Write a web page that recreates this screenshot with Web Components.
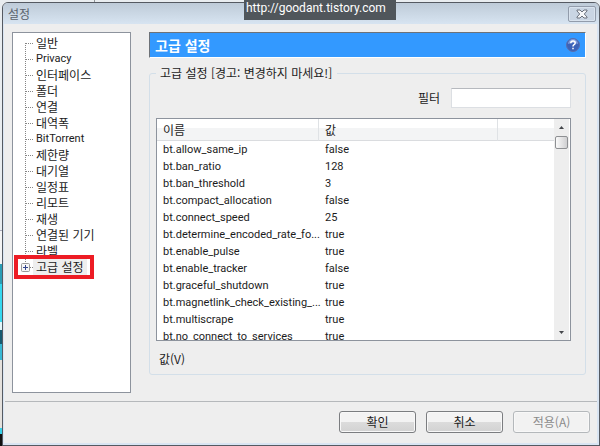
<!DOCTYPE html>
<html lang="ko">
<head>
<meta charset="utf-8">
<title>설정</title>
<style>
  html, body {height: 100%}
  body {
    margin: 0;
    box-sizing: border-box;
    padding: 2px 0 0 2px;
    overflow: hidden;
    color: #1c1c1c;
    font: 12px/16px "Noto Sans CJK KR", sans-serif;
    background:
      linear-gradient(90deg, transparent 94px, #8f9498 94px 95px, transparent 95px) 0 0/100% 2px no-repeat,
      linear-gradient(#e9edf0 230px, #aab 230px 231px, #f4f4f4 231px 264px, #2a9db5 264px 284px, #35d8f0 284px 322px, #e0f6fa 322px 330px, #155a70 330px 344px, #38b8d4 344px 360px, #e4e1dd 360px 428px, #35d0e8 428px 434px, #111 434px);
  }
</style>
</head>
<body>

<template id="app-dialog">
  <style>
    :host {
      position: relative;
      display: flex;
      flex-direction: column;
      box-sizing: border-box;
      height: 100%;
      border: 1px solid #555a62;
      border-radius: 6px 6px 0 0;
      background: #eee;
      box-shadow: inset -2px -2px #d9e5f3, inset 1px 0 #d9e5f3;
      overflow: hidden;
    }
    main {
      display: flex;
      flex: 1;
      min-height: 0;
      gap: 18px;
      padding: 8px 13px 8px 9px;
    }
    .page {
      display: flex;
      flex-direction: column;
      flex: 1;
      min-width: 0;
      gap: 7px;
    }
    footer {
      display: flex;
      justify-content: flex-end;
      gap: 10px;
      margin: 0 2px;
      padding: 9px 7px 12px;
      border-top: 1px solid #b5b8bb;
    }
  </style>
  <slot name="title"></slot>
  <main>
    <slot name="tree"></slot>
    <div class="page"><slot></slot></div>
  </main>
  <footer><slot name="actions"></slot></footer>
</template>

<template id="title-bar">
  <style>
    :host {
      display: flex;
      align-items: center;
      justify-content: space-between;
      height: 21px;
      padding: 0 3px 0 5px;
      color: #5a626c;
      background: linear-gradient(#becbd8, #d7e4f1);
    }
    h1 {margin: 0; font: inherit}
    button {
      display: grid;
      place-items: center;
      width: 28px;
      height: 16px;
      padding: 0;
      border: 1px solid #929cab;
      border-radius: 2px;
      background: #c9d5e3;
      box-shadow: inset 0 0 0 1px #d9e3ee;
    }
  </style>
  <h1><slot></slot></h1>
  <button type="button" aria-label="닫기">
    <svg width="12" height="10" viewBox="0 0 12 10"><path d="M1 1h3l2 2 2-2h3v1L8.300 5 11 8v1H8L6 7 4 9H1V8l2.700-3L1 2z" fill="#f6f8fa" stroke="#6b717c"/></svg>
  </button>
</template>

<template id="option-tree">
  <style>
    :host {
      box-sizing: border-box;
      width: 119px;
      border: 1px solid #8d939d;
      background: #fff;
    }
    ul {
      margin: 0;
      padding: 2px 0 0 12px;
      list-style: none;
    }
    li {
      position: relative;
      display: flex;
      align-items: center;
      height: 16px;
      white-space: nowrap;
    }
    .lines {flex: none}
    a {
      padding: 0 3px;
      color: inherit;
      text-decoration: none;
    }
    a:lang(en) {font: 11px/16px Roboto, sans-serif}
    .lines path {stroke: #858585; stroke-dasharray: 1 1}
    .current .lines {margin-left: -4px}
    .current a {background: #eee}
    .current::after {
      content: "";
      position: absolute;
      inset: -4px auto -4px -11px;
      width: 72px;
      border: 4px solid #ed1c24;
    }
  </style>
  <ul></ul>
</template>

<template id="page-banner">
  <style>
    :host {
      display: flex;
      align-items: center;
      justify-content: space-between;
      box-sizing: border-box;
      height: 26px;
      padding: 0 5px;
      border: 1px solid;
      border-color: #6d7278 #fff #fff #6d7278;
      color: #fff;
      background: #3399ff;
    }
    h2 {margin: 0; font-size: 14px; line-height: 20px; font-weight: 700}
    a {display: flex}
  </style>
  <h2><slot></slot></h2>
  <a href="#help" aria-label="도움말">
    <svg width="14" height="14" viewBox="0 0 14 14">
      <circle cx="7" cy="7" r="6.500" fill="#3c62b8" stroke="#5a6fae"/>
      <path d="M2 6a5 5 0 0 1 10 0q-5-2-10 0z" fill="#7f9bdb"/>
      <path d="M4.800 5.300q0-2.200 2.200-2.200t2.200 1.900q0 1.100-1.100 1.700T7 8.600M7 9.800v1.500" fill="none" stroke="#fff" stroke-width="1.500"/>
    </svg>
  </a>
</template>

<template id="settings-group">
  <style>
    :host {
      display: flex;
      flex: 1;
      min-height: 0;
    }
    fieldset {
      display: flex;
      flex-direction: column;
      flex: 1;
      min-width: 0;
      margin: 0 0 18px;
      padding: 7px 14px 7px 6px;
      border: 1px solid #d3dfe9;
      border-radius: 3px;
    }
    legend {margin: 0; padding: 0 5px 0 4px}
    .filter {
      display: flex;
      align-items: center;
      justify-content: flex-end;
      gap: 11px;
      margin-bottom: 10px;
    }
    input {
      box-sizing: border-box;
      width: 120px;
      height: 20px;
      border: 1px solid #dcdfe3;
      border-top-color: #b6b9be;
      background: #fff;
      font: inherit;
    }
    .value {margin: 10px 0 0 3px}
  </style>
  <fieldset>
    <legend><slot name="legend"></slot></legend>
    <div class="filter">
      <label for="filter">필터</label>
      <input id="filter" type="text">
    </div>
    <slot></slot>
    <div class="value"><slot name="value"></slot></div>
  </fieldset>
</template>

<template id="option-table">
  <style>
    :host {
      display: flex;
      flex: 1;
      min-height: 0;
      border: 1px solid #8d939d;
      background: #fff;
    }
    .rows {flex: 1; min-width: 0; overflow: hidden}
    table {
      width: 100%;
      table-layout: fixed;
      border-collapse: separate;
      border-spacing: 0;
    }
    .name {width: 162px}
    .blank {width: 56px}
    th, td {
      box-sizing: border-box;
      height: 17px;
      padding: 0 0 0 6px;
      text-align: left;
      font-weight: 400;
      white-space: nowrap;
    }
    td {font: 11px/17px Roboto, sans-serif}
    th {
      height: 22px;
      border-right: 1px solid #dfe2e5;
      border-bottom: 1px solid #dadcdf;
      background: linear-gradient(#fff 45%, #f3f4f5 45%);
    }
    th:last-child {border-right: 0}
    .bar {
      display: flex;
      flex-direction: column;
      align-items: center;
      width: 15px;
      margin-right: 1px;
      background: #eee;
    }
    .bar svg {flex: none}
    .thumb {
      box-sizing: border-box;
      width: 13px;
      height: 13px;
      border: 1px solid #8e9093;
      border-radius: 2px;
      background: linear-gradient(90deg, #fafafa, #cfcfd1);
    }
    .space {flex: 1}
  </style>
  <div class="rows">
    <table>
      <colgroup><col class="name"><col><col class="blank"></colgroup>
      <thead><tr><th>이름</th><th>값</th><th></th></tr></thead>
      <tbody></tbody>
    </table>
  </div>
  <div class="bar">
    <svg width="15" height="17" viewBox="0 0 15 17"><path d="M5 10l2.500-3L10 10z" fill="#44474b"/></svg>
    <div class="thumb"></div>
    <div class="space"></div>
    <svg width="15" height="17" viewBox="0 0 15 17"><path d="M5 8h5l-2.500 3z" fill="#44474b"/></svg>
  </div>
</template>

<template id="dialog-button">
  <style>
    :host {display: block}
    button {
      display: block;
      box-sizing: border-box;
      width: 77px;
      height: 22px;
      padding: 0;
      border: 1px solid #7b7d80;
      border-radius: 3px;
      color: inherit;
      font: inherit;
      background: linear-gradient(#f3f3f3 50%, #dcdcdc 50%, #d2d2d2);
      box-shadow: inset 0 0 0 1px #f8f8f8;
    }
    button:disabled {
      border-color: #b4b8bb;
      color: #8b8b8b;
      background: #f2f2f2;
    }
  </style>
  <button type="button"><slot></slot></button>
</template>

<template id="url-tag">
  <style>
    :host {
      position: absolute;
      top: 0;
      left: 244px;
      box-sizing: border-box;
      width: 152px;
      height: 20px;
      padding: 0 2px;
      color: #fff;
      background: #50565b;
      font: 12px/17px Roboto, sans-serif;
    }
  </style>
  <slot></slot>
</template>

<app-dialog>
  <title-bar slot="title">설정</title-bar>
  <option-tree slot="tree"></option-tree>
  <page-banner>고급 설정</page-banner>
  <settings-group>
    <span slot="legend">고급 설정 [경고: 변경하지 마세요!]</span>
    <option-table></option-table>
    <span slot="value">값(V)</span>
  </settings-group>
  <dialog-button slot="actions">확인</dialog-button>
  <dialog-button slot="actions">취소</dialog-button>
  <dialog-button slot="actions" disabled>적용(A)</dialog-button>
</app-dialog>
<url-tag>http://goodant.tistory.com</url-tag>

<script>
  (function() {
    let $ = (selector, node = document) => node.querySelector(selector);

    class BaseElement extends HTMLElement {
      constructor() {
        super();
        let content = $(`template#${this.localName}`).content.cloneNode(true);
        this.attachShadow({mode: 'open'}).append(content);
      }
    }

    class OptionTree extends BaseElement {
      connectedCallback() {
        let items = ['일반', 'Privacy', '인터페이스', '폴더', '연결', '대역폭', 'BitTorrent', '제한량',
          '대기열', '일정표', '리모트', '재생', '연결된 기기', '라벨', '고급 설정'];
        let last = items.length - 1;
        $('ul', this.shadowRoot).innerHTML = items.map((item, i) => {
          if (i == last) {
            return `<li class="current">
              <svg class="lines" width="12" height="16" viewBox="0 0 12 16">
                <path d="M4.500 0v4M9 8.500h3"/>
                <rect x=".5" y="4.500" width="8" height="8" rx="1" fill="#f6f6f6" stroke="#999"/>
                <path d="M2 8.500h5M4.500 6v5" style="stroke:#33458c;stroke-dasharray:none"/>
              </svg><a href="#page">${item}</a></li>`;
          }
          let lang = /^[a-z]/i.test(item) ? 'en' : 'ko';
          return `<li>
            <svg class="lines" width="8" height="16" viewBox="0 0 8 16"><path d="M.5 ${i ? 0 : 8}V16M1 8.500h7"/></svg>
            <a href="#page" lang="${lang}">${item}</a></li>`;
        }).join('');
      }
    }

    class OptionTable extends BaseElement {
      connectedCallback() {
        let rows = [
          ['bt.allow_same_ip', 'false'],
          ['bt.ban_ratio', '128'],
          ['bt.ban_threshold', '3'],
          ['bt.compact_allocation', 'false'],
          ['bt.connect_speed', '25'],
          ['bt.determine_encoded_rate_fo...', 'true'],
          ['bt.enable_pulse', 'true'],
          ['bt.enable_tracker', 'false'],
          ['bt.graceful_shutdown', 'true'],
          ['bt.magnetlink_check_existing_...', 'true'],
          ['bt.multiscrape', 'true'],
          ['bt.no_connect_to_services', 'true']
        ];
        $('tbody', this.shadowRoot).innerHTML = rows
          .map(([name, value]) => `<tr><td>${name}</td><td>${value}</td><td></td></tr>`)
          .join('');
      }
    }

    class DialogButton extends BaseElement {
      connectedCallback() {
        $('button', this.shadowRoot).disabled = this.hasAttribute('disabled');
      }
    }

    customElements.define('app-dialog', class extends BaseElement {});
    customElements.define('title-bar', class extends BaseElement {});
    customElements.define('option-tree', OptionTree);
    customElements.define('page-banner', class extends BaseElement {});
    customElements.define('settings-group', class extends BaseElement {});
    customElements.define('option-table', OptionTable);
    customElements.define('dialog-button', DialogButton);
    customElements.define('url-tag', class extends BaseElement {});
  })();
</script>
</body>
</html>
